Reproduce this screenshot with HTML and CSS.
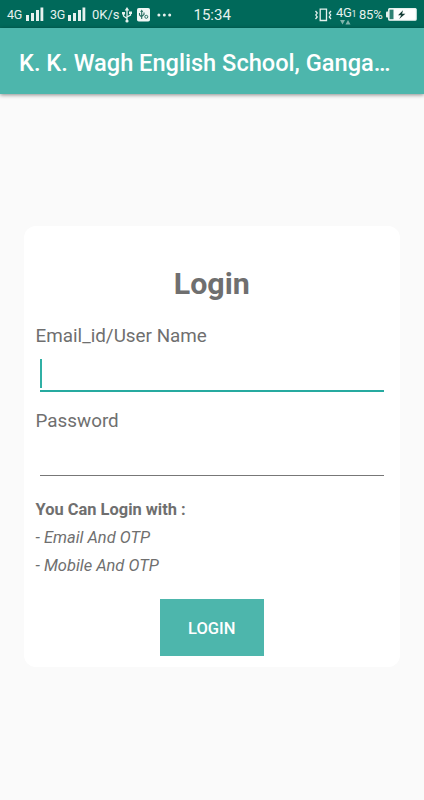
FILE: index.html
```html
<!DOCTYPE html>
<html lang="en">
<head>
<meta charset="utf-8">
<title>Login</title>
<link rel="stylesheet" href="styles.css">
</head>
<body>
<div class="status">
  <span class="net net-a">4G</span>
  <svg class="bars" width="18" height="14" viewBox="0 0 18 14" fill="#e6f1ee"><path d="M0 8h3v6H0zM5 6h3v8H5zM10 3h3v11h-3zM14.5 0.5h2.8V14h-2.8z"/></svg>
  <span class="net net-b">3G</span>
  <svg class="bars" width="18" height="14" viewBox="0 0 18 14" fill="#e6f1ee"><path d="M0 8h3v6H0zM5 6h3v8H5zM10 3h3v11h-3zM14.5 0.5h2.8V14h-2.8z"/></svg>
  <span class="speed">0K/s</span>
  <svg class="usb" width="10" height="16" viewBox="0 0 10 16"><path d="M5 2v12M1.5 6v3L5 11.5M8.5 5v3L5 10" fill="none" stroke="#e6f1ee" stroke-width="1.3"/><path d="M5 0l2.3 3.5H2.7zM0 5h3v2.5H0zM7 4.5h3V7H7z" fill="#e6f1ee"/><circle cx="5" cy="14" r="1.6" fill="#e6f1ee"/></svg>
  <svg class="app" width="13" height="14" viewBox="0 0 13 14"><rect width="13" height="13.5" rx="1.8" fill="#f0f7f5"/><path d="M4.7 3v8M2.5 5v2l2.2 2M7 4.5v2L4.7 8.5" fill="none" stroke="#2b6f63" stroke-width="1.1"/><path d="M4.7 1.5L6.2 4h-3z" fill="#2b6f63"/><circle cx="9.3" cy="8.8" r="1.5" fill="none" stroke="#2b6f63"/></svg>
  <svg class="dots" width="15" height="4" viewBox="0 0 15 4" fill="#e6f1ee"><circle cx="1.9" cy="2" r="1.5"/><circle cx="7.3" cy="2" r="1.5"/><circle cx="12.7" cy="2" r="1.5"/></svg>
  <span class="clock">15:34</span>
  <svg class="vibrate" width="17" height="14" viewBox="0 0 17 14" fill="none" stroke="#e6f1ee"><path d="M5.2 1.2h6.3v11.3H5.2z" stroke-width="1.3"/><path d="M.5 3l1.7 2-1.4 2 1.4 2L.5 11M16 3l-1.7 2 1.4 2-1.4 2 1.7 2" stroke-width="1.3"/></svg>
  <span class="data">
    <span class="data-label">4G<span class="sim">1</span></span>
    <svg class="arrows" width="11" height="5" viewBox="0 0 11 5" fill="#80b4ab"><path d="M0 0h5L2.5 4.5zM5.5 4.5h5L8 0z"/></svg>
  </span>
  <span class="percent">85%</span>
  <svg class="battery" width="31" height="13" viewBox="0 0 31 13"><path d="M0 4.5Q0 3.5 1 3.5h1.5v6H1q-1 0-1-1z" fill="#e6f1ee"/><rect x="2.6" y=".6" width="27.6" height="11.6" rx="1" fill="#fff" stroke="#e6f1ee" stroke-width="1.1"/><path d="M3.5 1.6h4v9.6h-4z" fill="#2f8173"/><path d="M17 2.2l-5 5h3.2l-2 3.8 6.2-5.3h-3.3z" fill="#163d36"/></svg>
</div>
<header class="bar"><h1>K. K. Wagh English School, Ganga…</h1></header>
<main class="page">
  <form class="card">
    <h2>Login</h2>
    <div class="label">Email_id/User Name</div>
    <div class="field focused"><span class="caret"></span></div>
    <div class="label second">Password</div>
    <div class="field"></div>
    <p class="hint strong">You Can Login with :</p>
    <p class="hint">- Email And OTP</p>
    <p class="hint">- Mobile And OTP</p>
    <button class="login" type="button">LOGIN</button>
  </form>
</main>
</body>
</html>
```

FILE: styles.css
```css
* { box-sizing: border-box; }
body { margin: 0; width: 424px; height: 800px; overflow: hidden; background: #fafafa; font-family: Roboto, sans-serif; color: #6f6f6f; display: flex; flex-direction: column; }
.status { height: 28px; flex: none; background: #00695a; color: #e6f1ee; display: flex; align-items: center; padding-top: 1px; white-space: nowrap; }
.status > * { flex: none; }
.net { font-size: 12.5px; line-height: 14px; letter-spacing: -0.3px; }
.net-a { width: 19px; margin-left: 7px; }
.net-b { width: 18px; margin-left: 6px; }
.bars { margin-top: -1px; }
.speed { font-size: 13px; width: 28px; margin-left: 6px; }
.usb { margin-left: 2px; }
.app { margin-left: 5px; }
.dots { margin-left: 7px; }
.clock { font-size: 15px; width: 37px; margin-left: 21.5px; }
.vibrate { margin-left: 84px; }
.data { width: 21px; height: 20px; margin-left: 4.5px; display: flex; flex-direction: column; align-items: flex-start; }
.data-label { font-size: 13px; line-height: 15px; letter-spacing: -0.4px; }
.sim { font-size: 9px; }
.arrows { margin-left: 4px; margin-top: -2px; }
.percent { font-size: 13px; width: 25px; margin-left: 2px; letter-spacing: -0.2px; }
.battery { margin-left: 1.5px; }
.bar { height: 66px; flex: none; background: #4db6ac; box-shadow: 0 1px 4px rgba(0,0,0,.45); padding: 0 19px; display: flex; align-items: center; z-index: 1; }
h1 { margin: 3px 0 0; font-size: 23.6px; line-height: 28px; font-weight: 500; color: #fff; white-space: nowrap; }
.page { padding: 132.4px 24px 0 23.5px; }
.card { height: 441.1px; border-radius: 12px; background: #fff; padding: 39.6px 12px 0; display: flex; flex-direction: column; }
h2 { margin: 0; font-size: 30.4px; line-height: 36px; font-weight: 700; text-align: center; }
.label { font-size: 18.85px; line-height: 24px; margin-top: 22px; }
.field { height: 43px; margin: 0 4px 0 4.5px; border-bottom: 1px solid #777; }
.focused { height: 44px; border-bottom: 2px solid #26aaa0; }
.caret { display: block; width: 2px; height: 29px; margin-top: 11px; background: #30b0a5; }
.label.second { margin-top: 17px; }
.hint { margin: 0; font-size: 16.45px; line-height: 28px; font-style: italic; }
.hint.strong { font-style: normal; font-weight: 700; margin-top: 20px; }
.login { width: 104px; height: 56.5px; align-self: center; margin-top: 19.5px; padding: 1px 0 0; border: 0; background: #4db6ac; color: #fff; font: 500 16.5px Roboto, sans-serif; }
```
